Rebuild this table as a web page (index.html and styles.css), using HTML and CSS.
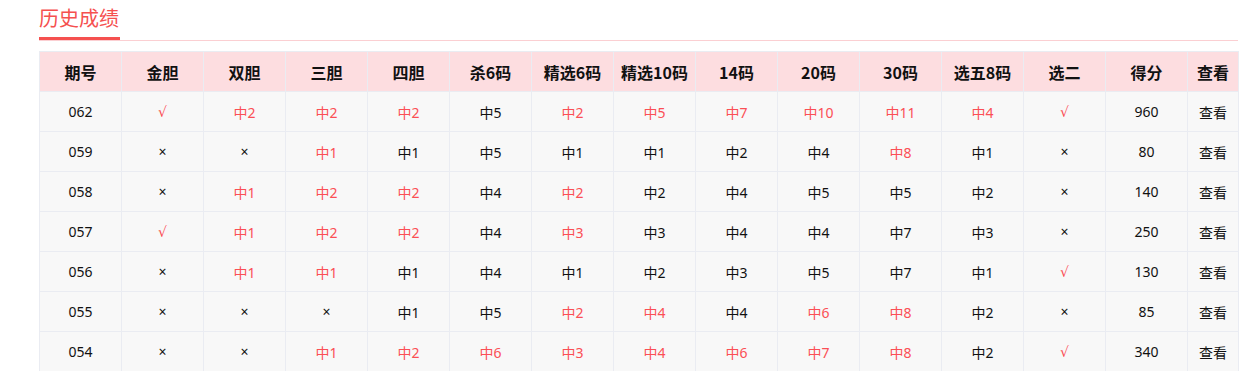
FILE: index.html
```html
<!DOCTYPE html>
<html lang="zh-CN">
<head>
<meta charset="utf-8">
<title>历史成绩</title>
<link rel="stylesheet" href="styles.css">
</head>
<body>
<div class="wrap">
  <div class="title-bar"><span class="title">历史成绩</span></div>
  <table class="grid">
    <colgroup>
      <col class="c"><col class="c"><col class="c"><col class="c"><col class="c"><col class="c"><col class="c"><col class="c"><col class="c"><col class="c"><col class="c"><col class="c"><col class="c"><col class="c"><col class="last">
    </colgroup>
    <thead>
      <tr><th>期号</th><th>金胆</th><th>双胆</th><th>三胆</th><th>四胆</th><th>杀6码</th><th>精选6码</th><th>精选10码</th><th>14码</th><th>20码</th><th>30码</th><th>选五8码</th><th>选二</th><th>得分</th><th>查看</th></tr>
    </thead>
    <tbody>
      <tr><td>062</td><td class="r">√</td><td class="r">中2</td><td class="r">中2</td><td class="r">中2</td><td>中5</td><td class="r">中2</td><td class="r">中5</td><td class="r">中7</td><td class="r">中10</td><td class="r">中11</td><td class="r">中4</td><td class="r">√</td><td>960</td><td>查看</td></tr>
      <tr><td>059</td><td>×</td><td>×</td><td class="r">中1</td><td>中1</td><td>中5</td><td>中1</td><td>中1</td><td>中2</td><td>中4</td><td class="r">中8</td><td>中1</td><td>×</td><td>80</td><td>查看</td></tr>
      <tr><td>058</td><td>×</td><td class="r">中1</td><td class="r">中2</td><td class="r">中2</td><td>中4</td><td class="r">中2</td><td>中2</td><td>中4</td><td>中5</td><td>中5</td><td>中2</td><td>×</td><td>140</td><td>查看</td></tr>
      <tr><td>057</td><td class="r">√</td><td class="r">中1</td><td class="r">中2</td><td class="r">中2</td><td>中4</td><td class="r">中3</td><td>中3</td><td>中4</td><td>中4</td><td>中7</td><td>中3</td><td>×</td><td>250</td><td>查看</td></tr>
      <tr><td>056</td><td>×</td><td class="r">中1</td><td class="r">中1</td><td>中1</td><td>中4</td><td>中1</td><td>中2</td><td>中3</td><td>中5</td><td>中7</td><td>中1</td><td class="r">√</td><td>130</td><td>查看</td></tr>
      <tr><td>055</td><td>×</td><td>×</td><td>×</td><td>中1</td><td>中5</td><td class="r">中2</td><td class="r">中4</td><td>中4</td><td class="r">中6</td><td class="r">中8</td><td>中2</td><td>×</td><td>85</td><td>查看</td></tr>
      <tr><td>054</td><td>×</td><td>×</td><td class="r">中1</td><td class="r">中2</td><td class="r">中6</td><td class="r">中3</td><td class="r">中4</td><td class="r">中6</td><td class="r">中7</td><td class="r">中8</td><td>中2</td><td class="r">√</td><td>340</td><td>查看</td></tr>
    </tbody>
  </table>
</div>
</body>
</html>
```

FILE: styles.css
```css
html, body {
  margin: 0;
  padding: 0;
  background: #ffffff;
}

body {
  font-family: "Noto Sans CJK SC", "Noto Sans", sans-serif;
  color: #111;
}

.wrap {
  width: 1199px;
  padding-left: 39px;
}

.title-bar {
  display: flex;
  height: 40px;
  border-bottom: 1px solid #fbcfd2;
}

.title {
  display: block;
  font-size: 20px;
  line-height: 35px;
  height: 37px;
  color: #f5504f;
  border-bottom: 3px solid #f5504f;
  padding-right: 1px;
}

.grid {
  margin-top: 10px;
  border-collapse: collapse;
  table-layout: fixed;
  width: 1199px;
  background: #f8f8f8;
}

.grid .c {
  width: 82px;
}

.grid .last {
  width: 51px;
}

.grid th,
.grid td {
  border: 1px solid #eaecf2;
  height: 39px;
  padding: 0;
  text-align: center;
  white-space: nowrap;
  overflow: hidden;
}

.grid th {
  background: #fddde0;
  font-size: 16px;
  font-weight: bold;
  color: #111;
}

.grid td {
  font-family: "Noto Sans", "DejaVu Sans", "Noto Sans CJK SC", sans-serif;
  font-size: 14px;
  color: #111;
}

.grid td.r {
  color: #fb4f55;
}
```
